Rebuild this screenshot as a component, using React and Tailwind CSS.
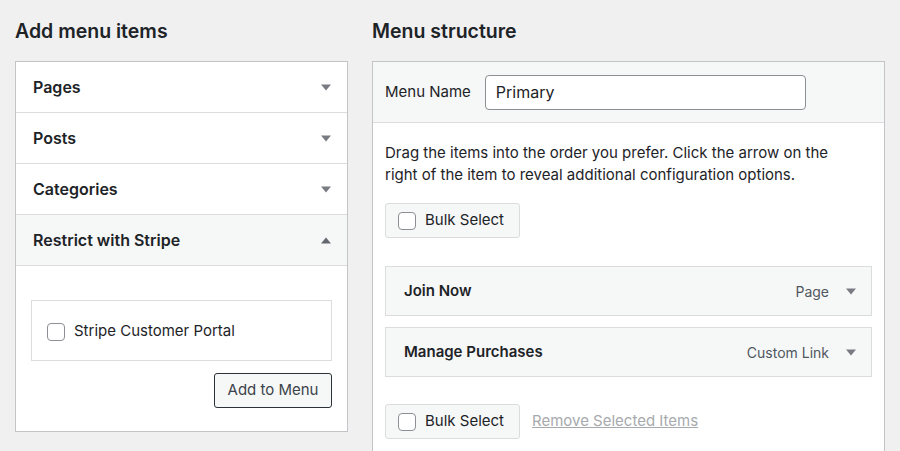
import React from 'react';

const font = { fontFamily: 'Inter, "Liberation Sans", sans-serif' };

function Caret({ up = false }) {
  return (
    <svg width="10" height="7" viewBox="0 0 10 7" className="shrink-0">
      {up ? (
        <path d="M0 6.5 L5 0.5 L10 6.5 Z" fill="#646970" />
      ) : (
        <path d="M0 0.5 L10 0.5 L5 6.5 Z" fill="#787c82" />
      )}
    </svg>
  );
}

function Checkbox() {
  return <span className="block w-[18px] h-[18px] rounded-[4px] border border-[#8c8f94] bg-white shrink-0" />;
}

function AccordionRow({ title, open = false }) {
  return (
    <div
      className={`h-[51px] flex items-center justify-between pl-[17px] pr-[16px] border-b border-[#dcdcde] ${
        open ? 'bg-[#f6f7f7]' : 'bg-white'
      }`}
    >
      <span className="text-[16px] font-semibold text-[#1d2327]">{title}</span>
      <Caret up={open} />
    </div>
  );
}

function BulkSelect() {
  return (
    <div className="h-[35px] w-[135px] flex items-center gap-[9px] pl-[12px] bg-[#f6f7f7] border border-[#dcdcde] rounded-[3px]">
      <Checkbox />
      <span className="text-[15px] text-[#1d2327]">Bulk Select</span>
    </div>
  );
}

function MenuItem({ title, type }) {
  return (
    <div className="h-[50px] flex items-center justify-between pl-[18px] pr-[15px] bg-[#f6f7f7] border border-[#dcdcde]">
      <span className="text-[15px] font-semibold text-[#1d2327]">{title}</span>
      <div className="flex items-center gap-[17px]">
        <span className="text-[14px] text-[#50575e]">{type}</span>
        <Caret />
      </div>
    </div>
  );
}

export default function App() {
  return (
    <div className="w-[900px] h-[451px] overflow-hidden bg-[#f0f0f1] flex gap-[23px] px-[15px]" style={font}>
      {/* Left column */}
      <div className="w-[333px] shrink-0">
        <h2 className="h-[61px] flex items-center pt-[2px] text-[19.5px] font-semibold text-[#1d2327]">Add menu items</h2>
        <div className="border border-[#c3c4c7] bg-white">
          <AccordionRow title="Pages" />
          <AccordionRow title="Posts" />
          <AccordionRow title="Categories" />
          <AccordionRow title="Restrict with Stripe" open />
          <div className="px-[15px] pt-[34px] pb-[23px] flex flex-col items-end">
            <div className="w-full h-[61px] border border-[#dcdcde] flex items-center gap-[9px] pl-[15px] pt-[2px]">
              <Checkbox />
              <span className="text-[15px] text-[#1d2327]">Stripe Customer Portal</span>
            </div>
            <button className="mt-[12px] h-[35px] w-[118px] border border-[#2c3338] rounded-[3px] bg-[#f6f7f7] text-[15px] text-[#3c434a]">
              Add to Menu
            </button>
          </div>
        </div>
      </div>

      {/* Right column */}
      <div className="flex-1 pl-[1px]">
        <h2 className="h-[61px] flex items-center pt-[2px] text-[19.5px] font-semibold text-[#1d2327]">Menu structure</h2>
        <div className="border border-[#c3c4c7] bg-white h-[400px]">
          <div className="h-[61px] bg-[#f6f7f7] border-b border-[#dcdcde] flex items-center px-[12px] gap-[14px]">
            <span className="text-[15px] text-[#1d2327]">Menu Name</span>
            <div className="h-[35px] w-[321px] border border-[#8c8f94] rounded-[4px] bg-white flex items-center px-[10px]">
              <span className="text-[16px] text-[#1d2327]">Primary</span>
            </div>
          </div>
          <div className="px-[12px] pt-[19px]">
            <p className="text-[15px] leading-[22px] text-[#1d2327] pr-[30px]">
              Drag the items into the order you prefer. Click the arrow on the right of the item to reveal additional
              configuration options.
            </p>
            <div className="mt-[17px]">
              <BulkSelect />
            </div>
            <div className="mt-[28px] flex flex-col gap-[11px]">
              <MenuItem title="Join Now" type="Page" />
              <MenuItem title="Manage Purchases" type="Custom Link" />
            </div>
            <div className="mt-[27px] flex items-center gap-[12px]">
              <BulkSelect />
              <span className="text-[15px] text-[#a7aaad] underline">Remove Selected Items</span>
            </div>
          </div>
        </div>
      </div>
    </div>
  );
}
